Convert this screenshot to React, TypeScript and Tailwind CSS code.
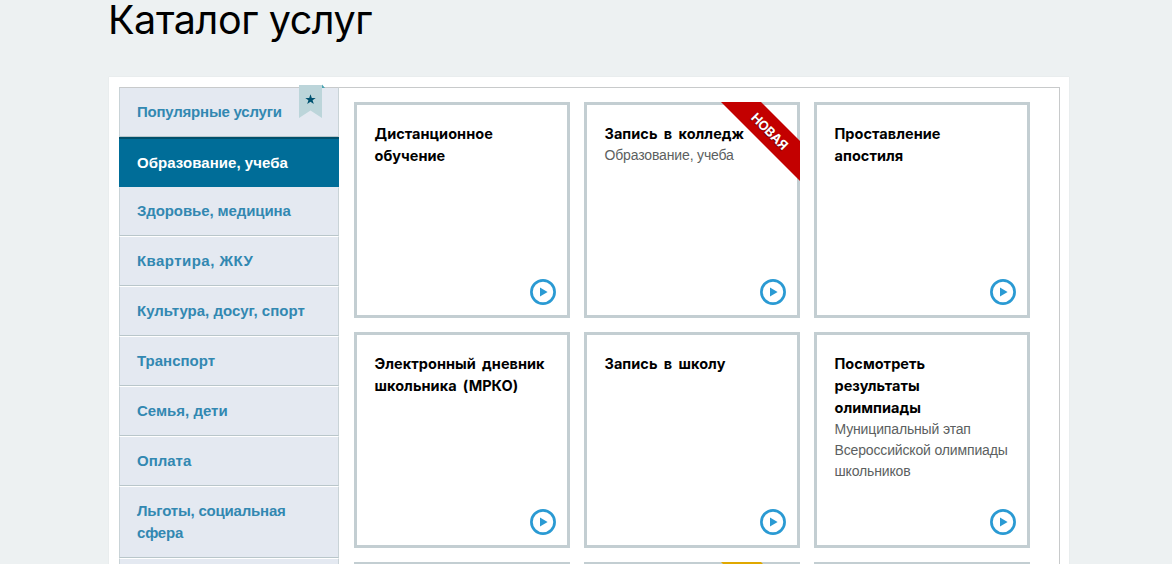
import { clsx } from "clsx";

type Category = {
  name: string;
  tracking: string;
  active?: boolean;
};

type Service = {
  title: string[];
  text?: string[];
  tag?: string;
};

const categories: Category[] = [
  { name: "Популярные услуги", tracking: "tracking-[-0.22px]" },
  { name: "Образование, учеба", tracking: "tracking-[0.05px]", active: true },
  { name: "Здоровье, медицина", tracking: "tracking-[-0.1px]" },
  { name: "Квартира, ЖКУ", tracking: "tracking-[0.45px]" },
  { name: "Культура, досуг, спорт", tracking: "tracking-[0px]" },
  { name: "Транспорт", tracking: "tracking-[0px]" },
  { name: "Семья, дети", tracking: "tracking-[0px]" },
  { name: "Оплата", tracking: "tracking-[0px]" },
  { name: "Льготы, социальная сфера", tracking: "tracking-[-0.2px]" },
  { name: "", tracking: "tracking-[0px]" },
];

const services: Service[] = [
  { title: ["Дистанционное", "обучение"] },
  { title: ["Запись в колледж"], text: ["Образование, учеба"], tag: "new" },
  { title: ["Проставление", "апостиля"] },
  { title: ["Электронный дневник", "школьника (МРКО)"] },
  { title: ["Запись в школу"] },
  {
    title: ["Посмотреть", "результаты", "олимпиады"],
    text: ["Муниципальный этап", "Всероссийской олимпиады", "школьников"],
  },
  { title: [] },
  { title: [], tag: "soon" },
  { title: [] },
];

const Bookmark = () => (
  <svg className="absolute left-[180px] -top-[3px]" width="26" height="34" viewBox="0 0 26 34">
    <path d="M23 0.5L26 4H23Z" fill="#4aa3b0" />
    <path d="M0 1H23V34L11.5 26.5L0 34Z" fill="#bcd5da" />
    <path
      d="M11.5 10.2L12.8 14H16.7L13.6 16.3L14.8 20.1L11.5 17.8L8.2 20.1L9.4 16.3L6.3 14H10.2Z"
      fill="#005270"
    />
  </svg>
);

const PlayButton = () => (
  <svg width="26" height="26" viewBox="0 0 26 26">
    <circle cx="13" cy="13" r="11.6" fill="none" stroke="#2a9ad3" strokeWidth="2.7" />
    <path d="M10 8.6L17.6 13L10 17.4Z" fill="#2a9ad3" />
  </svg>
);

const ServiceCard = ({ title, text, tag }: Service) => (
  <a className="relative flex h-[216px] flex-col justify-between border-3 border-[#c3ced2] bg-white pt-[18px] pr-[11px] pb-[10px] pl-[17.5px]">
    <div className="whitespace-nowrap">
      <h3 className="font-['Inter',sans-serif] text-[14.5px] leading-[22px] font-bold tracking-[0.04px] [word-spacing:2.8px] text-black">
        {title.map((line) => (
          <span key={line} className="block">{line}</span>
        ))}
      </h3>
      {text && (
        <p className="text-[14px] leading-[21px] tracking-[-0.15px] text-[#5c5f61]">
          {text.map((line) => (
            <span key={line} className="block">{line}</span>
          ))}
        </p>
      )}
    </div>
    <div className="flex justify-end">
      <PlayButton />
    </div>
    {tag && (
      <div className="absolute -right-[3px] -top-[3px] grid h-[79px] w-[79px]">
        <svg className="col-start-1 row-start-1" width="79" height="79" viewBox="0 0 79 79">
          <path d="M0 0H40L79 39V79Z" fill={tag === "new" ? "#c30000" : "#e0a800"} />
        </svg>
        {tag === "new" && (
          <span className="col-start-1 row-start-1 mb-[22px] ml-[18px] rotate-45 place-self-center font-['Inter',sans-serif] text-[13px] leading-4 font-bold tracking-[-0.2px] text-white [text-shadow:0_1px_1px_#600]">
            НОВАЯ
          </span>
        )}
      </div>
    )}
  </a>
);

const App = () => {
  return (
    <div className="h-[564px] overflow-hidden bg-[#edf1f2] pl-[109px] font-['Liberation_Sans',Arial,sans-serif]">
      <h1 className="-ml-[1px] h-[77px] font-['Inter',sans-serif] text-[39.5px] leading-[41px] tracking-[-0.42px] text-black whitespace-nowrap">
        Каталог услуг
      </h1>

      <div className="w-[960px] bg-white p-[10px] pr-[9px] shadow-[0_0_1px_#d5dadc]">
        <div className="flex h-[620px] w-[941px] border-t border-r border-[#c8cacb]">
          <nav className="relative -mt-px w-[220px] shrink-0">
            {categories.map((item, i) => (
              <a
                key={i}
                className={clsx(
                  "block border-b pl-[18px] pr-8 pb-[13px] text-[15px] leading-[22px] font-bold",
                  item.active
                    ? "border-b-[#006d98] border-t-2 border-t-[#00506c] bg-[#006d98] pt-[13px] pb-[12px]! text-white"
                    : "border-x border-x-[#c9d3d7] border-b-[#b9c6ca] border-t bg-[#e4e9f1] pl-[17px]! text-[#3288b1]",
                  !item.active && (i === 0 ? "border-t-[#c8cacb] pt-[13px]" : i === 2 ? "border-t-[#e4e9f1] pt-[12px]" : "border-t-white pt-[13px]"),
                  item.tracking
                )}
              >
                {item.name}
              </a>
            ))}
            <Bookmark />
          </nav>

          <div className="grid h-min grid-cols-[216px_216px_216px] gap-[14px] pl-[15px] pt-[14px]">
            {services.map((item, i) => (
              <ServiceCard key={i} {...item} />
            ))}
          </div>
        </div>
      </div>
    </div>
  );
};

export default App;
